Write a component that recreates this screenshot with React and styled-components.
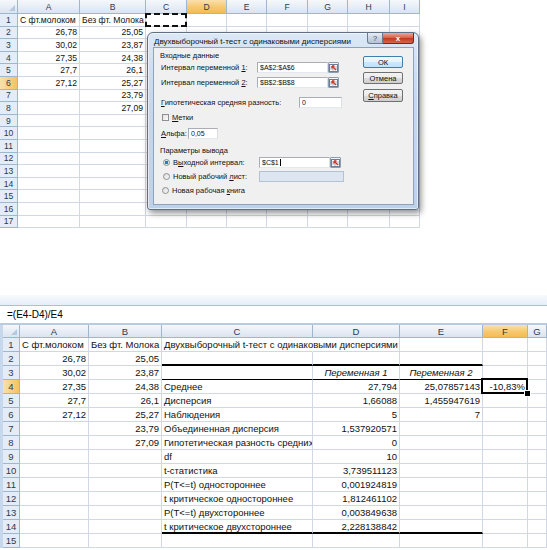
import React from "react";
import styled, { createGlobalStyle, css } from "styled-components";

const GlobalStyle = createGlobalStyle`
  html, body {
    margin: 0;
    padding: 0;
    background: #fff;
  }
  body {
    width: 547px;
    height: 550px;
    overflow: hidden;
    font-family: "Liberation Sans", Arial, sans-serif;
  }
`;

const topCols = ["A", "B", "C", "D", "E", "F", "G", "H", "I"];
const topWidths = "18px 62px 66px 41px 40px 40px 41px 40px 42px 30px";

const topRows = [
  ["С фт.молоком", "Без фт. Молока"],
  ["26,78", "25,05"],
  ["30,02", "23,87"],
  ["27,35", "24,38"],
  ["27,7", "26,1"],
  ["27,12", "25,27"],
  ["", "23,79"],
  ["", "27,09"],
  [], [], [], [], [], [], [], [], [],
];

const botCols = ["A", "B", "C", "D", "E", "F", "G"];
const botWidths = "17px 69px 73px 151px 87px 83px 45px 1fr";

const botRows = [
  ["С фт.молоком", "Без фт. Молока", "Двухвыборочный t-тест с одинаковыми дисперсиями"],
  ["26,78", "25,05"],
  ["30,02", "23,87", "", "Переменная 1", "Переменная 2"],
  ["27,35", "24,38", "Среднее", "27,794", "25,07857143", "-10,83%"],
  ["27,7", "26,1", "Дисперсия", "1,66088", "1,455947619"],
  ["27,12", "25,27", "Наблюдения", "5", "7"],
  ["", "23,79", "Объединенная дисперсия", "1,537920571"],
  ["", "27,09", "Гипотетическая разность средних", "0"],
  ["", "", "df", "10"],
  ["", "", "t-статистика", "3,739511123"],
  ["", "", "P(T<=t) одностороннее", "0,001924819"],
  ["", "", "t критическое одностороннее", "1,812461102"],
  ["", "", "P(T<=t) двухстороннее", "0,003849638"],
  ["", "", "t критическое двухстороннее", "2,228138842"],
  [],
];

const isNum = (v) => /^-?[\d,]+%?$/.test(v);

function App() {
  return (
    <Page>
      <GlobalStyle />
      <TopShot>
        <Grid $cols={topWidths} $head={14} $rows={17} $rh={12.6} $fs={8.6}>
          <Corner />
          {topCols.map((c) => (
            <ColHead key={c} $on={c === "D"}>{c}</ColHead>
          ))}
          {topRows.map((row, r) => (
            <React.Fragment key={r}>
              <RowHead $on={r === 5}>{r + 1}</RowHead>
              {topCols.map((c, i) => {
                const v = row[i] || "";
                return (
                  <Cell key={c} $align={isNum(v) ? "right" : "left"} $ants={r === 0 && c === "C"}>
                    {v}
                  </Cell>
                );
              })}
            </React.Fragment>
          ))}
        </Grid>

        <Dialog>
          <TitleBar>
            <TitleText>Двухвыборочный t-тест с одинаковыми дисперсиями</TitleText>
            <HelpButton>?</HelpButton>
            <CloseButton>x</CloseButton>
          </TitleBar>
          <DialogBody>
            <Form>
              <Section>Входные данные</Section>
              <Field $mt={1} $lw={96}>
                <span>Интервал переменной <u>1</u>:</span>
                <TextBox $w={71}>$A$2:$A$6</TextBox>
                <Picker><PickIcon /></Picker>
              </Field>
              <Field $mt={4} $lw={96}>
                <span>Интервал переменной <u>2</u>:</span>
                <TextBox $w={71}>$B$2:$B$8</TextBox>
                <Picker><PickIcon /></Picker>
              </Field>
              <Field $mt={9} $lw={138}>
                <span><u>Г</u>ипотетическая средняя разность:</span>
                <TextBox $w={43}>0</TextBox>
              </Field>
              <Option $mt={4}>
                <CheckBox />
                <span><u>М</u>етки</span>
              </Option>
              <Field $mt={5} $lw={27}>
                <span><u>А</u>льфа:</span>
                <TextBox $w={30}>0,05</TextBox>
              </Field>
              <Section $mt={5}>Параметры вывода</Section>
              <Field $mt={1} $lw={96}>
                <Option>
                  <Radio $on />
                  <span>В<u>ы</u>ходной интервал:</span>
                </Option>
                <TextBox $w={71}>$C$1<Caret /></TextBox>
                <Picker><PickIcon /></Picker>
              </Field>
              <Field $mt={3} $lw={96}>
                <Option>
                  <Radio />
                  <span>Новый рабочий <u>л</u>ист:</span>
                </Option>
                <TextBox $w={85} $off />
              </Field>
              <Option $mt={3}>
                <Radio />
                <span>Новая рабочая <u>к</u>нига</span>
              </Option>
            </Form>
            <ButtonColumn>
              <DlgButton $default>ОК</DlgButton>
              <DlgButton>Отмена</DlgButton>
              <DlgButton $mt={1} $h={13}><u>С</u>правка</DlgButton>
            </ButtonColumn>
          </DialogBody>
        </Dialog>
      </TopShot>

      <BottomShot>
        <RibbonEdge />
        <FormulaBar>=(E4-D4)/E4</FormulaBar>
        <Grid $cols={botWidths} $head={13} $rows={15} $rh={14} $fs={9.5}>
          <Corner />
          {botCols.map((c) => (
            <ColHead key={c} $on={c === "F"}>{c}</ColHead>
          ))}
          {botRows.map((row, r) => (
            <React.Fragment key={r}>
              <RowHead $on={r === 3}>{r + 1}</RowHead>
              {botCols.map((c, i) => {
                const v = row[i] || "";
                const inTable = i >= 2 && i <= 4;
                let bb;
                if (inTable && (r === 1 || r === 13)) bb = "thick";
                else if (inTable && r === 2) bb = "thin";
                const head = r === 2 && (i === 3 || i === 4);
                return (
                  <Cell
                    key={c}
                    $align={head ? "center" : isNum(v) ? "right" : "left"}
                    $italic={head}
                    $bb={bb}
                    $spill={r === 0 && i === 2}
                    $nr={r === 0 && i === 2}
                    $sel={r === 3 && c === "F"}
                  >
                    {v}
                  </Cell>
                );
              })}
            </React.Fragment>
          ))}
        </Grid>
      </BottomShot>
    </Page>
  );
}

function PickIcon() {
  return (
    <svg width="9" height="8" viewBox="0 0 9 8">
      <rect x="0.5" y="0.5" width="8" height="7" fill="#fff" stroke="#6c7f99" />
      <line x1="1" y1="3" x2="8" y2="3" stroke="#a9b8cc" />
      <line x1="1" y1="5" x2="8" y2="5" stroke="#a9b8cc" />
      <line x1="4" y1="1" x2="4" y2="7" stroke="#a9b8cc" />
      <path d="M3 2 L7 6 M3 2 L3 4.5 M3 2 L5.5 2" stroke="#d23a22" strokeWidth="1.3" fill="none" />
    </svg>
  );
}

const Page = styled.div`
  width: 547px;
  height: 550px;
  background: #fff;
`;

const TopShot = styled.div`
  position: relative;
  width: 420px;
  height: 229px;
  overflow: visible;
`;

const Grid = styled.div`
  display: grid;
  grid-template-columns: ${(p) => p.$cols};
  grid-template-rows: ${(p) => p.$head}px repeat(${(p) => p.$rows}, ${(p) => p.$rh}px);
  font-size: ${(p) => p.$fs}px;
  color: #111;
  background: #fff;
`;

const headBase = css`
  box-sizing: border-box;
  display: flex;
  align-items: center;
  justify-content: center;
  color: #2c3a4f;
  border-right: 1px solid #9eb6ce;
  border-bottom: 1px solid #9eb6ce;
  background: ${(p) =>
    p.$on
      ? "linear-gradient(180deg, #fbe0ad 0%, #f7c86f 55%, #f3bb55 100%)"
      : "linear-gradient(180deg, #f5f8fc 0%, #e6ecf5 60%, #dbe4f0 100%)"};
`;

const Corner = styled.div`
  ${headBase};
  position: relative;
  &::after {
    content: "";
    position: absolute;
    right: 2px;
    bottom: 2px;
    border-left: 6px solid transparent;
    border-bottom: 6px solid #b6c8de;
  }
`;

const ColHead = styled.div`
  ${headBase};
`;

const RowHead = styled.div`
  ${headBase};
  background: ${(p) =>
    p.$on ? "linear-gradient(90deg, #fbe0ad, #f5c260)" : "#e4ecf7"};
`;

const Cell = styled.div`
  position: relative;
  box-sizing: border-box;
  display: flex;
  align-items: center;
  justify-content: ${(p) =>
    p.$align === "right" ? "flex-end" : p.$align === "center" ? "center" : "flex-start"};
  padding: 0 2px;
  white-space: nowrap;
  overflow: ${(p) => (p.$spill || p.$sel || p.$ants ? "visible" : "hidden")};
  font-style: ${(p) => (p.$italic ? "italic" : "normal")};
  border-right: 1px solid ${(p) => (p.$nr ? "transparent" : "#d0d7e5")};
  border-bottom: ${(p) =>
    p.$bb === "thick"
      ? "2px solid #000"
      : p.$bb === "thin"
      ? "1px solid #000"
      : "1px solid #d0d7e5"};

  ${(p) =>
    p.$sel &&
    css`
      &::before {
        content: "";
        position: absolute;
        inset: -2px -1px -1px -2px;
        border: 2px solid #000;
        z-index: 2;
      }
      &::after {
        content: "";
        position: absolute;
        right: -4px;
        bottom: -4px;
        width: 5px;
        height: 5px;
        background: #000;
        border: 1px solid #fff;
        z-index: 3;
      }
    `}

  ${(p) =>
    p.$ants &&
    css`
      &::before {
        content: "";
        position: absolute;
        inset: -1px -1px -1px -1px;
        border: 2px dashed #111;
      }
    `}
`;

const Dialog = styled.div`
  position: absolute;
  left: 147px;
  top: 32px;
  width: 272px;
  height: 178px;
  box-sizing: border-box;
  display: flex;
  flex-direction: column;
  padding: 0 4px 4px 5px;
  border: 1px solid #5e7087;
  border-radius: 6px 6px 3px 3px;
  background: linear-gradient(180deg, #dbe8f6 0%, #c6d9ee 35%, #bdd2ea 100%);
  box-shadow: 2px 3px 6px rgba(0, 0, 0, 0.45), inset 0 0 0 1px rgba(255, 255, 255, 0.55);
  font-family: "Liberation Sans", Arial, sans-serif;
  color: #111;
`;

const TitleBar = styled.div`
  height: 14px;
  display: flex;
  align-items: flex-start;
`;

const TitleText = styled.div`
  flex: 1;
  font-size: 8px;
  margin-top: 4px;
  margin-left: 1px;
  white-space: nowrap;
`;

const HelpButton = styled.div`
  box-sizing: border-box;
  width: 16px;
  height: 11px;
  display: flex;
  align-items: center;
  justify-content: center;
  font-size: 8px;
  color: #3d4a5c;
  border: 1px solid #6b7a8f;
  border-top: none;
  border-radius: 0 0 0 3px;
  background: linear-gradient(180deg, #e7edf4 0%, #c9d5e3 50%, #b3c3d6 100%);
`;

const CloseButton = styled.div`
  box-sizing: border-box;
  width: 31px;
  height: 11px;
  display: flex;
  align-items: center;
  justify-content: center;
  font-size: 8px;
  font-weight: bold;
  color: #fff;
  border: 1px solid #6e2a1f;
  border-top: none;
  border-left: none;
  border-radius: 0 0 3px 0;
  background: linear-gradient(180deg, #eaa99a 0%, #d5654f 45%, #c23b23 55%, #d6664b 100%);
`;

const DialogBody = styled.div`
  flex: 1;
  display: flex;
  background: #f0f0f0;
  border: 1px solid #8ea2bb;
  font-size: 7.5px;
`;

const Form = styled.div`
  display: flex;
  flex-direction: column;
  padding: 1px 0 0 6px;
`;

const Section = styled.div`
  height: 12px;
  display: flex;
  align-items: center;
  margin-top: ${(p) => p.$mt || 0}px;
`;

const Field = styled.div`
  height: 11px;
  display: flex;
  align-items: center;
  padding-left: 1px;
  margin-top: ${(p) => p.$mt || 0}px;
  & > :first-child {
    width: ${(p) => p.$lw}px;
    flex: none;
    white-space: nowrap;
  }
`;

const Option = styled.div`
  height: 11px;
  display: flex;
  align-items: center;
  gap: 3px;
  padding-left: 2px;
  margin-top: ${(p) => p.$mt || 0}px;
  white-space: nowrap;
`;

const TextBox = styled.div`
  box-sizing: border-box;
  width: ${(p) => p.$w}px;
  height: 11px;
  display: flex;
  align-items: center;
  padding-left: 2px;
  border: 1px solid ${(p) => (p.$off ? "#b4c3d4" : "#abadb3")};
  border-right-color: ${(p) => (p.$off ? "#b4c3d4" : "#dbdfe6")};
  border-bottom-color: ${(p) => (p.$off ? "#b4c3d4" : "#e3e9ef")};
  background: ${(p) => (p.$off ? "#dde6f0" : "#fff")};
  font-size: 7px;
`;

const Caret = styled.span`
  display: inline-block;
  width: 1px;
  height: 7px;
  background: #000;
  margin-left: 1px;
`;

const Picker = styled.div`
  box-sizing: border-box;
  width: 11px;
  height: 11px;
  display: flex;
  align-items: center;
  justify-content: center;
  border: 1px solid #8d9cb1;
  border-radius: 1px;
  background: linear-gradient(180deg, #f4f7fb, #d6e0ec);
`;

const CheckBox = styled.div`
  box-sizing: border-box;
  width: 7px;
  height: 7px;
  border: 1px solid #8f8f8f;
  background: linear-gradient(135deg, #e2e2e2, #fbfbfb);
`;

const Radio = styled.div`
  box-sizing: border-box;
  width: 7px;
  height: 7px;
  border-radius: 50%;
  border: 1px solid #8f8f8f;
  background: ${(p) =>
    p.$on
      ? "radial-gradient(circle, #2f78c4 0 1.6px, #dfe8f2 2px)"
      : "linear-gradient(135deg, #dcdcdc, #fafafa)"};
`;

const ButtonColumn = styled.div`
  margin-left: auto;
  margin-right: 10px;
  padding-top: 8px;
  width: 40px;
  display: flex;
  flex-direction: column;
  gap: 4px;
`;

const DlgButton = styled.div`
  box-sizing: border-box;
  height: ${(p) => p.$h || 12}px;
  margin-top: ${(p) => p.$mt || 0}px;
  display: flex;
  align-items: center;
  justify-content: center;
  font-size: 7.5px;
  border-radius: 2px;
  border: 1px solid ${(p) => (p.$default ? "#3c7fb1" : "#707070")};
  background: ${(p) =>
    p.$default
      ? "linear-gradient(180deg, #f2f9fe 0%, #e4f2fc 50%, #cde9fb 51%, #bfe2fa 100%)"
      : "linear-gradient(180deg, #f3f3f3 0%, #ebebeb 50%, #dddddd 51%, #cfcfcf 100%)"};
`;

const BottomShot = styled.div`
  margin-top: 66px;
  width: 547px;
  box-sizing: border-box;
  border-left: 3px solid #c8d8ec;
`;

const RibbonEdge = styled.div`
  height: 10px;
  background: linear-gradient(180deg, #f7fafd 0%, #e6eef8 100%);
  border-bottom: 1px solid #aac0da;
  margin-left: -3px;
`;

const FormulaBar = styled.div`
  height: 17px;
  display: flex;
  align-items: center;
  padding-left: 7px;
  font-size: 10px;
  background: #fff;
  border-bottom: 2px solid #b9cbe0;
  margin-left: -3px;
`;

export default App;
